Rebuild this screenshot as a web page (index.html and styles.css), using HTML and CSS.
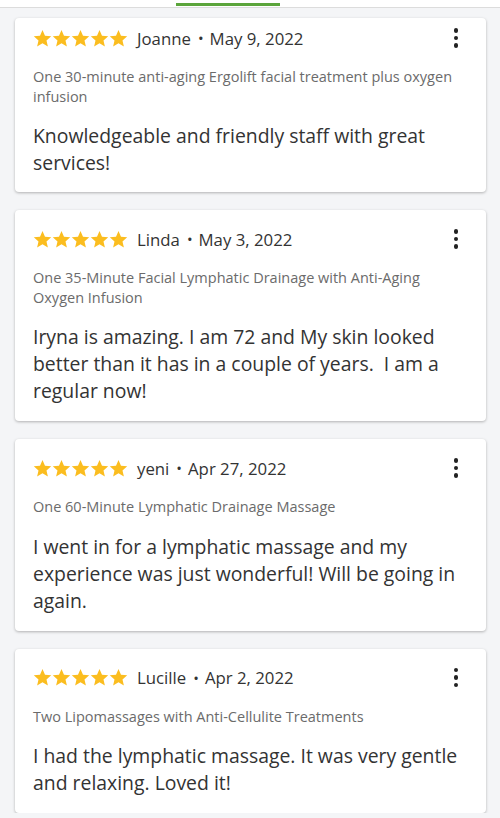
FILE: index.html
```html
<!DOCTYPE html>
<html lang="en">
<head>
<meta charset="utf-8">
<title>Reviews</title>
<link rel="stylesheet" href="styles.css">
</head>
<body>
<svg class="defs" width="0" height="0" aria-hidden="true">
  <defs>
    <symbol id="star" viewBox="0 0 24 24">
      <path d="M12 1.3l3.15 7.2 7.85.7-5.95 5.2 1.75 7.7L12 18.1l-6.8 4 1.75-7.7L1 9.2l7.85-.7z"/>
    </symbol>
  </defs>
</svg>
<div class="tabbar"><div class="tab-indicator"></div></div>
<main class="list">
  <article class="card card--first">
    <div class="card-head">
      <span class="stars"><svg><use href="#star"/></svg><svg><use href="#star"/></svg><svg><use href="#star"/></svg><svg><use href="#star"/></svg><svg><use href="#star"/></svg></span>
      <span class="author">Joanne</span><span class="sep">•</span><span class="date">May 9, 2022</span>
      <span class="kebab"><i></i><i></i><i></i></span>
    </div>
    <p class="service">One 30-minute anti-aging Ergolift facial treatment plus oxygen infusion</p>
    <p class="body">Knowledgeable and friendly staff with great services!</p>
  </article>
  <article class="card">
    <div class="card-head">
      <span class="stars"><svg><use href="#star"/></svg><svg><use href="#star"/></svg><svg><use href="#star"/></svg><svg><use href="#star"/></svg><svg><use href="#star"/></svg></span>
      <span class="author">Linda</span><span class="sep">•</span><span class="date">May 3, 2022</span>
      <span class="kebab"><i></i><i></i><i></i></span>
    </div>
    <p class="service">One 35-Minute Facial Lymphatic Drainage with Anti-Aging Oxygen Infusion</p>
    <p class="body">Iryna is amazing. I am 72 and My skin looked better than it has in a couple of years.&nbsp; I am a regular now!</p>
  </article>
  <article class="card">
    <div class="card-head">
      <span class="stars"><svg><use href="#star"/></svg><svg><use href="#star"/></svg><svg><use href="#star"/></svg><svg><use href="#star"/></svg><svg><use href="#star"/></svg></span>
      <span class="author">yeni</span><span class="sep">•</span><span class="date">Apr 27, 2022</span>
      <span class="kebab"><i></i><i></i><i></i></span>
    </div>
    <p class="service">One 60-Minute Lymphatic Drainage Massage</p>
    <p class="body">I went in for a lymphatic massage and my experience was just wonderful! Will be going in again.</p>
  </article>
  <article class="card">
    <div class="card-head">
      <span class="stars"><svg><use href="#star"/></svg><svg><use href="#star"/></svg><svg><use href="#star"/></svg><svg><use href="#star"/></svg><svg><use href="#star"/></svg></span>
      <span class="author">Lucille</span><span class="sep">•</span><span class="date">Apr 2, 2022</span>
      <span class="kebab"><i></i><i></i><i></i></span>
    </div>
    <p class="service">Two Lipomassages with Anti-Cellulite Treatments</p>
    <p class="body">I had the lymphatic massage. It was very gentle and relaxing. Loved it!</p>
  </article>
</main>
</body>
</html>
```
FILE: styles.css
```css
html, body {
  margin: 0;
  padding: 0;
}
body {
  background: #f4f5f7;
  font-family: "Open Sans", "Liberation Sans", sans-serif;
  color: #333;
  width: 500px;
  overflow: hidden;
}
.defs {
  position: absolute;
  width: 0;
  height: 0;
}
.tabbar {
  height: 7px;
  background: #fff;
  border-bottom: 1px solid #dcdcdc;
  position: relative;
}
.tab-indicator {
  position: absolute;
  left: 176px;
  top: 3px;
  width: 104px;
  height: 3px;
  background: #5ba53b;
}
.list {
  display: flex;
  flex-direction: column;
  gap: 18px;
  padding: 10px 14px 0 15px;
}
.card {
  background: #fff;
  border-radius: 4px;
  box-shadow: 0 1px 3px rgba(0, 0, 0, 0.28);
  padding: 19px 18px 17px 18px;
}
.card--first {
  padding-top: 10px;
  padding-bottom: 16px;
}
.card-head {
  display: flex;
  align-items: center;
  height: 20px;
  font-size: 16.8px;
  color: #333;
}
.stars {
  display: flex;
  fill: #fbbd1f;
  margin-right: 9px;
}
.stars svg {
  width: 19px;
  height: 19px;
  display: block;
}
.sep {
  margin: 0 6px 0 7px;
  font-size: 15px;
}
.kebab {
  margin-left: auto;
  margin-right: 10px;
  display: flex;
  flex-direction: column;
  gap: 3px;
}
.kebab i {
  display: block;
  width: 4.5px;
  height: 4.5px;
  border-radius: 50%;
  background: #222;
}
.service {
  margin: 19px 0 0;
  font-size: 14.5px;
  line-height: 19.5px;
  color: #6b6b6b;
}
.body {
  margin: 16px 0 0;
  font-size: 19.4px;
  line-height: 27px;
  color: #333;
}
```
